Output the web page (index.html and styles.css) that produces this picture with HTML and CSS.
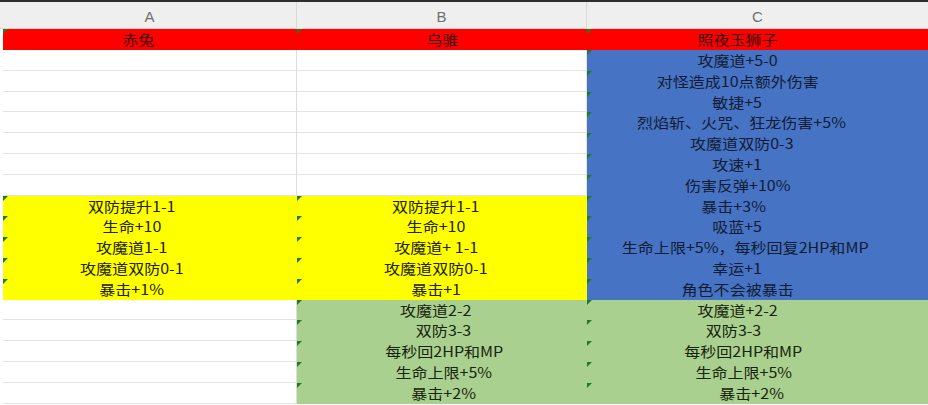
FILE: index.html
```html
<!DOCTYPE html>
<html lang="zh-CN">
<head>
<meta charset="utf-8">
<title>坐骑属性</title>
<link rel="stylesheet" href="styles.css">
</head>
<body>
<div class="topbar"></div>
<div class="sheet">
  <div class="hd a">A</div><div class="hd b">B</div><div class="hd c">C</div>

  <div class="cell a red t o-12"><span>赤兔</span></div><div class="cell b red t"><span>乌骓</span></div><div class="cell c red t o-20"><span>照夜玉狮子</span></div>

  <div class="cell a w"></div><div class="cell b w"></div><div class="cell c blue t o-20"><span>攻魔道+5-0</span></div>
  <div class="cell a w"></div><div class="cell b w"></div><div class="cell c blue t o-20"><span>对怪造成10点额外伤害</span></div>
  <div class="cell a w"></div><div class="cell b w"></div><div class="cell c blue t o-20"><span>敏捷+5</span></div>
  <div class="cell a w"></div><div class="cell b w"></div><div class="cell c blue t o-16"><span>烈焰斩、火咒、狂龙伤害+5%</span></div>
  <div class="cell a w"></div><div class="cell b w"></div><div class="cell c blue t o-16"><span>攻魔道双防0-3</span></div>
  <div class="cell a w"></div><div class="cell b w"></div><div class="cell c blue t o-20"><span>攻速+1</span></div>
  <div class="cell a w"></div><div class="cell b w"></div><div class="cell c blue t o-20"><span>伤害反弹+10%</span></div>

  <div class="cell a yellow t o-18"><span>双防提升1-1</span></div><div class="cell b yellow t o-6"><span>双防提升1-1</span></div><div class="cell c blue t o-24"><span>暴击+3%</span></div>
  <div class="cell a yellow t o-18"><span>生命+10</span></div><div class="cell b yellow t o-6"><span>生命+10</span></div><div class="cell c blue t o-20"><span>吸蓝+5</span></div>
  <div class="cell a yellow t o-18"><span>攻魔道1-1</span></div><div class="cell b yellow t o-6"><span>攻魔道+ 1-1</span></div><div class="cell c blue t o-12"><span>生命上限+5%，每秒回复2HP和MP</span></div>
  <div class="cell a yellow t o-18"><span>攻魔道双防0-1</span></div><div class="cell b yellow t o-6"><span>攻魔道双防0-1</span></div><div class="cell c blue t o-20"><span>幸运+1</span></div>
  <div class="cell a yellow t o-18"><span>暴击+1%</span></div><div class="cell b yellow t o-6"><span>暴击+1</span></div><div class="cell c blue t o-20"><span>角色不会被暴击</span></div>

  <div class="cell a w"></div><div class="cell b green t o-6"><span>攻魔道2-2</span></div><div class="cell c green t o-20"><span>攻魔道+2-2</span></div>
  <div class="cell a w"></div><div class="cell b green t o2"><span>双防3-3</span></div><div class="cell c green t o-24"><span>双防3-3</span></div>
  <div class="cell a w"></div><div class="cell b green t o2"><span>每秒回2HP和MP</span></div><div class="cell c green t o-14"><span>每秒回2HP和MP</span></div>
  <div class="cell a w"></div><div class="cell b green t o2"><span>生命上限+5%</span></div><div class="cell c green t o-14"><span>生命上限+5%</span></div>
  <div class="cell a w"></div><div class="cell b green t o2"><span>暴击+2%</span></div><div class="cell c green t o-6"><span>暴击+2%</span></div>
</div>
</body>
</html>
```

FILE: styles.css
```css
html, body {
  margin: 0;
  padding: 0;
  background: #ffffff;
  overflow: hidden;
}

.topbar {
  height: 2px;
  background: #2e2e2e;
}

.sheet {
  display: grid;
  grid-template-columns: 3px 294px 290px 341px;
  grid-template-rows: 27px 21px repeat(17, 20.8px);
  font-family: "Noto Sans CJK SC", "Noto Sans", sans-serif;
}

.hd {
  background: #efefef;
  color: #6f6f6f;
  font-family: "Liberation Sans", "DejaVu Sans", sans-serif;
  font-size: 15px;
  display: flex;
  align-items: center;
  justify-content: center;
  border-right: 1px solid #d9d9d9;
  border-bottom: 1px solid #e4d9c8;
  box-sizing: border-box;
  padding-top: 3px;
}
.hd.a { grid-column: 1 / 3; padding-left: 3px; }
.hd.b { grid-column: 3; }
.hd.c { grid-column: 4; border-right: none; }

.cell {
  position: relative;
  display: flex;
  align-items: stretch;
  justify-content: center;
  white-space: pre;
  font-size: 14.2px;
  line-height: 20.6px;
  color: #1d1d1d;
  box-sizing: border-box;
}
.cell span {
  display: inline-block;
  transform: scaleX(1.13);
  transform-origin: 50% 50%;
}
.cell.a { grid-column: 2; }
.cell.b { grid-column: 3; }
.cell.c { grid-column: 4; }

.w {
  background: #ffffff;
  border-bottom: 1px solid #e3e3e3;
  border-right: 1px solid #e3e3e3;
}
.w.a { border-right-color: #dcdcdc; }

.red { background: #ff0000; color: #3a0000; }
.blue { background: #4673c4; color: #121c33; }
.yellow { background: #ffff00; color: #222200; }
.green { background: #a9d08e; color: #18240f; }

.t::before {
  content: "";
  position: absolute;
  top: 0;
  left: 0;
  width: 0;
  height: 0;
  border-top: 5px solid #1f7a2a;
  border-right: 5px solid transparent;
}

/* horizontal text offsets (reproduces the uneven centring of the sheet) */
.o-24 { padding-right: 48px; }
.o-20 { padding-right: 40px; }
.o-18 { padding-right: 36px; }
.o-16 { padding-right: 32px; }
.o-14 { padding-right: 28px; }
.o-12 { padding-right: 24px; }
.o-6 { padding-right: 12px; }
.o2 { padding-left: 4px; }
```
